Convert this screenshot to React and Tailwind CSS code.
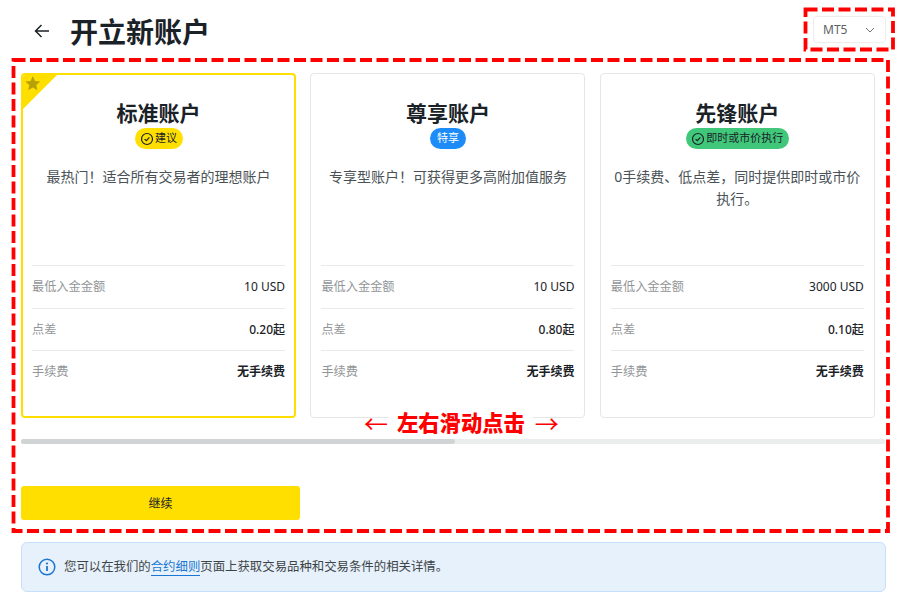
import React from "react";

const font = { fontFamily: '"Noto Sans", "Noto Sans CJK SC", sans-serif' };

function Check() {
  return (
    <svg viewBox="0 0 14 14" className="w-[14px] h-[14px] shrink-0 mr-[1px]" fill="none" stroke="currentColor">
      <circle cx="7" cy="7" r="5.5" strokeWidth="1.2" />
      <path d="M4.6 7.1 6.3 8.7 9.4 5.4" strokeWidth="1.2" />
    </svg>
  );
}

function Row({ label, value, weight }) {
  return (
    <div className="flex items-center justify-between h-[42.5px] pt-px border-t border-[#e9eaea] text-[12px]">
      <span className="text-[#939698] text-[12.2px]">{label}</span>
      <span className={`text-[#1a2227] ${weight}`}>{value}</span>
    </div>
  );
}

function Card({ title, badge, badgeCls, check, desc, min, spread, active }) {
  return (
    <div className={`relative w-[275px] h-[345px] shrink-0 rounded-[4px] bg-white flex flex-col overflow-hidden ${active ? "border-2 border-[#ffdf00] px-[9px]" : "border border-[#e5e6e6] px-[10px]"}`}>
      {active && (
        <div className="absolute left-0 top-0">
          <svg viewBox="0 0 34 34" className="w-[34px] h-[34px]">
            <path d="M0 0H34L0 34Z" fill="#ffdf00" />
            <path transform="translate(-1.7 -2.5)" d="M11.5 3.5l2.2 4.9 5.3.6-4 3.5 1.1 5.2-4.6-2.7-4.6 2.7 1.1-5.2-4-3.5 5.3-.6Z" fill="#b8a008" />
          </svg>
        </div>
      )}
      <div className={`flex flex-col items-center ${active ? "pt-[24px]" : "pt-[25px]"}`}>
        <h2 className="text-[21px] leading-[28px] font-bold text-[#1a2227]">{title}</h2>
        <div className={`mt-px h-[21px] px-[5.5px] rounded-full flex items-center text-[11px] ${badgeCls}`}>
          {check && <Check />}
          <span className={check ? "" : "px-[1.5px]"}>{badge}</span>
        </div>
        <p className="mt-[17px] text-[14px] leading-[22px] text-center text-[#4a5256]">{desc}</p>
      </div>
      <div className={active ? "mt-auto mb-[23.5px]" : "mt-auto mb-[24.5px]"}>
        <Row label="最低入金金额" value={min} weight="font-normal" />
        <Row label="点差" value={spread} weight="font-medium" />
        <Row label="手续费" value="无手续费" weight="font-bold" />
      </div>
    </div>
  );
}

export default function App() {
  return (
    <div className="relative w-[900px] h-[607px] overflow-hidden bg-white pl-[21px] pr-[14px]" style={font}>
      <header className="flex items-center h-[62px] pl-[13px]">
        <svg viewBox="0 0 16 16" className="w-[16px] h-[16px] text-[#1a2227]" fill="none" stroke="currentColor" strokeWidth="1.5">
          <path d="M15 8H1.5M7.5 2 1.5 8l6 6" />
        </svg>
        <h1 className="ml-[20px] mt-[2px] text-[28px] font-bold text-[#1a2227] leading-none">开立新账户</h1>
        <div className="ml-auto w-[73px] h-[27px] mb-[3px] border border-[#eceded] rounded-[4px] flex items-center justify-between pl-[9px] pr-[10px] text-[12px] text-[#5b6266]">
          <span>MT5</span>
          <svg viewBox="0 0 10 6" className="w-[10px] h-[6px]" fill="none" stroke="#6b7275" strokeWidth="1">
            <path d="M1 1l4 4 4-4" />
          </svg>
        </div>
      </header>

      <div className="mt-[11px] flex gap-[14.4px] overflow-hidden">
        <Card active title="标准账户" badge="建议" check badgeCls="bg-[#ffdf00] text-[#1a2227]" desc={"最热门\uFF01适合所有交易者的理想账户"} min="10 USD" spread="0.20起" />
        <Card title="尊享账户" badge="特享" badgeCls="bg-[#1d8cf8] text-white" desc={"专享型账户\uFF01可获得更多高附加值服务"} min="10 USD" spread="0.80起" />
        <Card title="先锋账户" badge="即时或市价执行" check badgeCls="bg-[#41c77a] text-[#1a2227]" desc={"0手续费、低点差\uFF0C同时提供即时或市价执行。"} min="3000 USD" spread="0.10起" />
      </div>

      <div className="mt-[21px] h-[5px] w-[864px] bg-[#eceded] rounded-full">
        <div className="h-full w-[434px] bg-[#d1d4d5] rounded-full" />
      </div>

      <button className="mt-[42px] block w-[279px] h-[34px] pt-px bg-[#ffdf00] rounded-[3px] text-[12px] text-[#1a2227]">继续</button>

      <div className="mt-[22px] w-[865px] h-[50px] flex items-center bg-[#e7f1fb] border border-[#c5e0fa] rounded-[6px] pl-[16px] text-[12.4px] text-[#3c4447]">
        <svg viewBox="0 0 18 18" className="w-[18px] h-[18px] mr-[8px] text-[#1976d2]" fill="none" stroke="currentColor">
          <circle cx="9" cy="9" r="7.8" strokeWidth="1.5" />
          <path d="M9 8v5" strokeWidth="1.8" />
          <circle cx="9" cy="5.5" r="1.1" fill="currentColor" stroke="none" />
        </svg>
        <span>
          您可以在我们的<span className="text-[#1976d2] border-b border-[#1976d2]">合约细则</span>页面上获取交易品种和交易条件的相关详情。
        </span>
      </div>

      <svg className="absolute left-0 top-0 pointer-events-none" width="900" height="607" fill="none" stroke="#ff0000" strokeWidth="3.8" strokeDasharray="12 4.5">
        <rect x="13.5" y="60" width="874.5" height="471" />
        <rect x="805.5" y="9.5" width="87.5" height="40" />
      </svg>

      <div className="absolute left-[364px] top-[411px] h-[24px] flex items-center text-[#ff0000] font-black text-[21.3px] leading-none">
        <span className="font-normal w-[25px] text-[24px] font-['Noto_Sans_CJK_SC']">←</span>
        <span className="bg-white px-[8px] h-[24px] flex items-center">左右滑动点击</span>
        <span className="font-normal text-[24px] ml-[2px] font-['Noto_Sans_CJK_SC']">→</span>
      </div>
    </div>
  );
}
